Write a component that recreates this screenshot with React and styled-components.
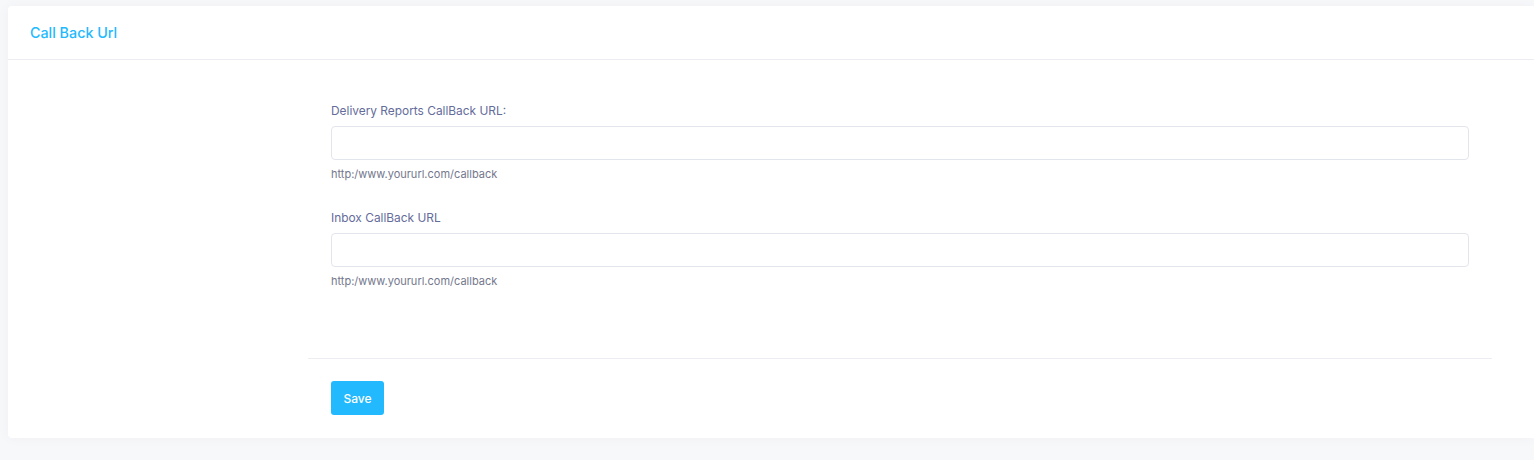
import React from 'react';
import styled, { createGlobalStyle } from 'styled-components';

const GlobalStyle = createGlobalStyle`
  html, body {
    margin: 0;
    padding: 0;
    background: #f7f8fa;
    overflow: hidden;
  }
  body {
    font-family: Inter, "Open Sans", sans-serif;
  }
`;

const Page = styled.div`
  padding: 6px 0 0 8px;
  height: 460px;
  box-sizing: border-box;
`;

const Card = styled.div`
  background: #fff;
  border-radius: 4px 0 0 4px;
  box-shadow: 0 0 13px 0 rgba(82, 63, 105, 0.04);
`;

const Header = styled.div`
  height: 53px;
  display: flex;
  align-items: center;
  padding: 0 22px;
  border-bottom: 1px solid #ebedf2;
`;

const Title = styled.h3`
  margin: 0;
  font-size: 14.3px;
  font-weight: 500;
  color: #22b9ff;
`;

const Body = styled.div`
  padding: 41px 0 0 300px;
`;

const Column = styled.div`
  width: 1184px;
`;

const Form = styled.div`
  padding: 0 23px;
  display: flex;
  flex-direction: column;
  gap: 26px;
`;

const Group = styled.div`
  display: flex;
  flex-direction: column;
`;

const Label = styled.label`
  font-size: 11.9px;
  line-height: 20px;
  color: #646c9a;
  margin-bottom: 5px;
`;

const Input = styled.input`
  height: 34px;
  box-sizing: border-box;
  border: 1px solid #e2e5ec;
  border-radius: 4px;
  padding: 0 12px;
  font-size: 13px;
  outline: none;
`;

const Help = styled.span`
  margin-top: 6px;
  font-size: 11px;
  line-height: 16px;
  color: #74788d;
`;

const Footer = styled.div`
  margin-top: 69px;
  border-top: 1px solid #ebedf2;
  padding: 22px 23px 23px;
`;

const SaveButton = styled.button`
  height: 34px;
  width: 53px;
  border: 0;
  border-radius: 3px;
  background: #22b9ff;
  color: #fff;
  font-family: inherit;
  font-size: 12px;
  font-weight: 500;
  cursor: pointer;
`;

const fields = [
  { id: 'dlr', label: 'Delivery Reports CallBack URL:' },
  { id: 'inbox', label: 'Inbox CallBack URL' },
];

export default function App() {
  return (
    <>
      <GlobalStyle />
      <Page>
        <Card>
          <Header>
            <Title>Call Back Url</Title>
          </Header>
          <Body>
            <Column>
              <Form>
                {fields.map((f) => (
                  <Group key={f.id}>
                    <Label htmlFor={f.id}>{f.label}</Label>
                    <Input id={f.id} type="text" />
                    <Help>http:/www.yoururl.com/callback</Help>
                  </Group>
                ))}
              </Form>
              <Footer>
                <SaveButton type="button">Save</SaveButton>
              </Footer>
            </Column>
          </Body>
        </Card>
      </Page>
    </>
  );
}
